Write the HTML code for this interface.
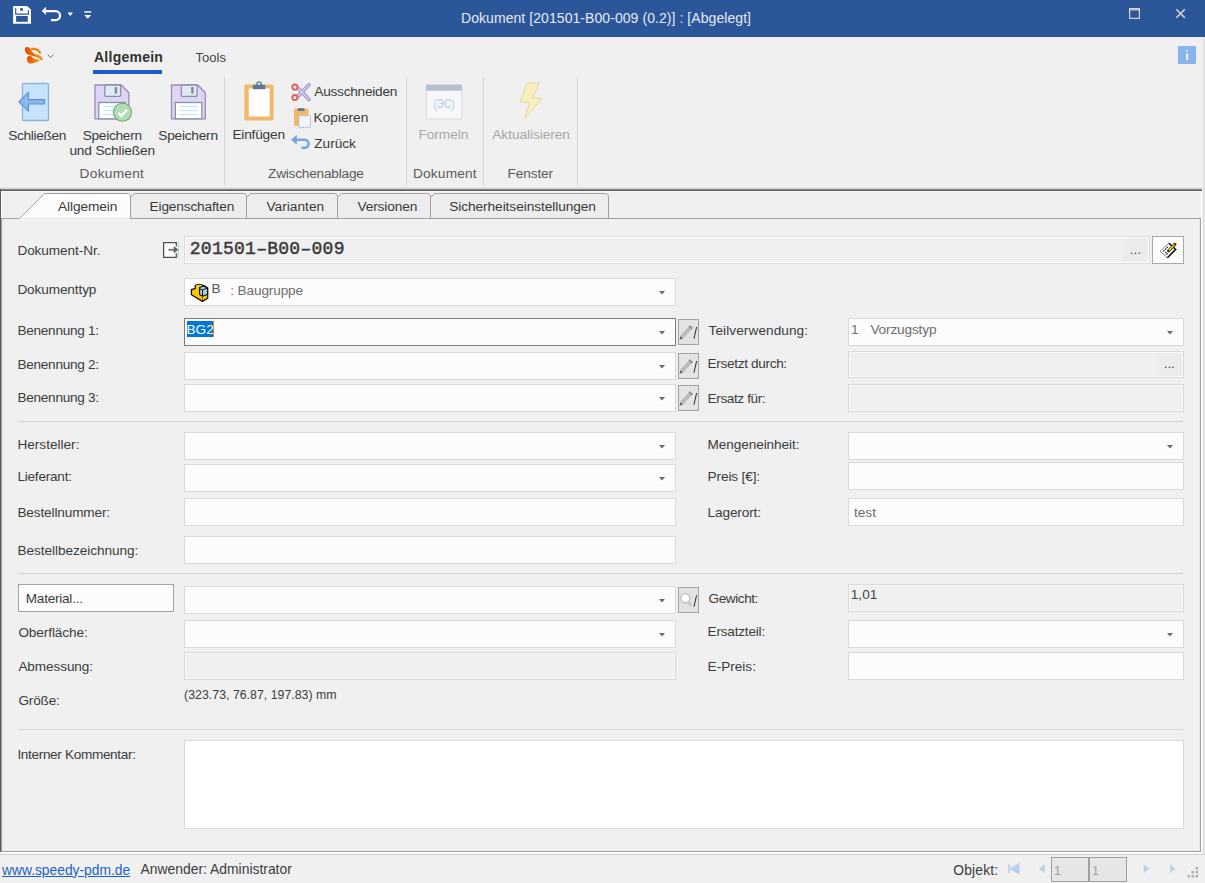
<!DOCTYPE html>
<html><head><meta charset="utf-8"><title>Dokument</title>
<style>
html,body{margin:0;padding:0;}
body{width:1205px;height:883px;position:relative;overflow:hidden;background:#f0f0f0;font-family:"Liberation Sans",sans-serif;}
.t{position:absolute;white-space:nowrap;line-height:1;}
.r{position:absolute;box-sizing:border-box;}
.ov{position:absolute;left:0;top:0;}
</style></head><body>
<div class="r" style="left:0px;top:0px;width:1205px;height:37px;background:#2b579a;"></div>
<div class="t" style="left:461.00px;top:10.70px;font-size:14px;color:#e6e9ef;font-weight:normal;font-family:'Liberation Sans', sans-serif;letter-spacing:0.065px;">Dokument [201501-B00-009 (0.2)] : [Abgelegt]</div>
<div class="r" style="left:0px;top:37px;width:1205px;height:152px;background:#f0f0f0;"></div>
<div class="t" style="left:94.00px;top:50.00px;font-size:14px;color:#303030;font-weight:bold;font-family:'Liberation Sans', sans-serif;letter-spacing:0.250px;">Allgemein</div>
<div class="t" style="left:195.50px;top:51.00px;font-size:13px;color:#444;font-weight:normal;font-family:'Liberation Sans', sans-serif;letter-spacing:0.050px;">Tools</div>
<div class="r" style="left:93px;top:70px;width:69px;height:4px;background:#1b5cc8;"></div>
<div class="r" style="left:224px;top:77px;width:1px;height:108px;background:#d4d4d4;"></div>
<div class="r" style="left:406px;top:77px;width:1px;height:108px;background:#d4d4d4;"></div>
<div class="r" style="left:483px;top:77px;width:1px;height:108px;background:#d4d4d4;"></div>
<div class="r" style="left:577px;top:77px;width:1px;height:108px;background:#d4d4d4;"></div>
<div class="t" style="left:8.30px;top:128.65px;font-size:13.7px;color:#3a3a3a;font-weight:normal;font-family:'Liberation Sans', sans-serif;letter-spacing:-0.350px;">Schließen</div>
<div class="t" style="left:82.70px;top:128.65px;font-size:13.7px;color:#3a3a3a;font-weight:normal;font-family:'Liberation Sans', sans-serif;letter-spacing:-0.287px;">Speichern</div>
<div class="t" style="left:69.40px;top:143.65px;font-size:13.7px;color:#3a3a3a;font-weight:normal;font-family:'Liberation Sans', sans-serif;letter-spacing:-0.158px;">und Schließen</div>
<div class="t" style="left:158.30px;top:128.65px;font-size:13.7px;color:#3a3a3a;font-weight:normal;font-family:'Liberation Sans', sans-serif;letter-spacing:-0.238px;">Speichern</div>
<div class="t" style="left:232.40px;top:128.35px;font-size:13.7px;color:#3a3a3a;font-weight:normal;font-family:'Liberation Sans', sans-serif;letter-spacing:-0.200px;">Einfügen</div>
<div class="t" style="left:314.30px;top:84.95px;font-size:13.7px;color:#3a3a3a;font-weight:normal;font-family:'Liberation Sans', sans-serif;letter-spacing:-0.264px;">Ausschneiden</div>
<div class="t" style="left:313.60px;top:110.95px;font-size:13.7px;color:#3a3a3a;font-weight:normal;font-family:'Liberation Sans', sans-serif;letter-spacing:-0.014px;">Kopieren</div>
<div class="t" style="left:314.30px;top:136.95px;font-size:13.7px;color:#3a3a3a;font-weight:normal;font-family:'Liberation Sans', sans-serif;letter-spacing:-0.060px;">Zurück</div>
<div class="t" style="left:418.40px;top:128.05px;font-size:13.7px;color:#a8a8a8;font-weight:normal;font-family:'Liberation Sans', sans-serif;letter-spacing:-0.017px;">Formeln</div>
<div class="t" style="left:492.30px;top:128.05px;font-size:13.7px;color:#a8a8a8;font-weight:normal;font-family:'Liberation Sans', sans-serif;letter-spacing:-0.058px;">Aktualisieren</div>
<div class="t" style="left:79.60px;top:167.25px;font-size:13.7px;color:#5a5a5a;font-weight:normal;font-family:'Liberation Sans', sans-serif;letter-spacing:0.271px;">Dokument</div>
<div class="t" style="left:268.00px;top:166.95px;font-size:13.7px;color:#5a5a5a;font-weight:normal;font-family:'Liberation Sans', sans-serif;letter-spacing:-0.231px;">Zwischenablage</div>
<div class="t" style="left:412.90px;top:167.45px;font-size:13.7px;color:#5a5a5a;font-weight:normal;font-family:'Liberation Sans', sans-serif;letter-spacing:0.200px;">Dokument</div>
<div class="t" style="left:507.50px;top:167.45px;font-size:13.7px;color:#5a5a5a;font-weight:normal;font-family:'Liberation Sans', sans-serif;letter-spacing:-0.133px;">Fenster</div>
<div class="r" style="left:0px;top:189px;width:1205px;height:666px;background:#f0f0f0;"></div>
<div class="r" style="left:0px;top:187px;width:1202px;height:1px;background:#e6e6e6;"></div>
<div class="r" style="left:0px;top:188px;width:1202px;height:1px;background:#cfcfcf;"></div>
<div class="r" style="left:0px;top:189px;width:1202px;height:1px;background:#8a8a8a;"></div>
<div class="r" style="left:0px;top:190px;width:1202px;height:1px;background:#5e5e5e;"></div>
<div class="r" style="left:0px;top:189px;width:1px;height:663px;background:#5c5c5c;"></div>
<div class="r" style="left:1px;top:191px;width:1px;height:28px;background:#ffffff;"></div>
<div class="r" style="left:2px;top:191px;width:1200px;height:1px;background:#fafafa;"></div>
<div class="r" style="left:1203px;top:37px;width:2px;height:818px;background:#e2e2e2;"></div>
<div class="r" style="left:1201px;top:191px;width:1px;height:662px;background:#ffffff;"></div>
<div class="r" style="left:1px;top:218px;width:1200px;height:634px;background:#f0f0f0;"></div>
<div class="r" style="left:1200px;top:218px;width:1px;height:634px;background:#a0a0a0;"></div>
<div class="r" style="left:1px;top:851px;width:1200px;height:1px;background:#a6a6a6;"></div>
<div class="r" style="left:1px;top:219px;width:1px;height:633px;background:#a0a0a0;"></div>
<div class="r" style="left:2px;top:219px;width:1px;height:632px;background:#e2e2e2;"></div>
<div class="r" style="left:3px;top:850px;width:1197px;height:1px;background:#e6e6e6;"></div>
<div class="r" style="left:1199px;top:219px;width:1px;height:632px;background:#e6e6e6;"></div>
<div class="r" style="left:0px;top:852px;width:1202px;height:2px;background:#fcfcfc;"></div>
<div class="r" style="left:0px;top:854px;width:1205px;height:1px;background:#d0d0d0;"></div>
<svg class="ov" width="1205" height="883" viewBox="0 0 1205 883">
<path d="M1 218.5 H1200.5" stroke="#a0a0a0" stroke-width="1" fill="none"/>
<path d="M19.5 218.5 L44.5 193.5 H128.5 L130.5 195.5 V218.5" fill="#fcfcfc" stroke="#a0a0a0" stroke-width="1"/>
<path d="M19 219 H130" stroke="#fcfcfc" stroke-width="1.2"/>
<path d="M130.5 218 V197.5 L134.5 193.5 H243.5 Q246.5 193.5 246.5 196.5 V218" fill="#ededed" stroke="#a0a0a0" stroke-width="1"/>
<path d="M246.5 218 V197.5 L250.5 193.5 H334.5 Q337.5 193.5 337.5 196.5 V218" fill="#ededed" stroke="#a0a0a0" stroke-width="1"/>
<path d="M337.5 218 V197.5 L341.5 193.5 H427.5 Q430.5 193.5 430.5 196.5 V218" fill="#ededed" stroke="#a0a0a0" stroke-width="1"/>
<path d="M430.5 218 V197.5 L434.5 193.5 H605.5 Q608.5 193.5 608.5 196.5 V218" fill="#ededed" stroke="#a0a0a0" stroke-width="1"/>
</svg>
<div class="t" style="left:58.00px;top:199.95px;font-size:13.7px;color:#3a3a3a;font-weight:normal;font-family:'Liberation Sans', sans-serif;letter-spacing:-0.088px;">Allgemein</div>
<div class="t" style="left:149.60px;top:199.95px;font-size:13.7px;color:#3a3a3a;font-weight:normal;font-family:'Liberation Sans', sans-serif;letter-spacing:-0.175px;">Eigenschaften</div>
<div class="t" style="left:266.40px;top:199.95px;font-size:13.7px;color:#3a3a3a;font-weight:normal;font-family:'Liberation Sans', sans-serif;letter-spacing:0.025px;">Varianten</div>
<div class="t" style="left:357.40px;top:199.95px;font-size:13.7px;color:#3a3a3a;font-weight:normal;font-family:'Liberation Sans', sans-serif;letter-spacing:-0.125px;">Versionen</div>
<div class="t" style="left:449.20px;top:199.95px;font-size:13.7px;color:#3a3a3a;font-weight:normal;font-family:'Liberation Sans', sans-serif;letter-spacing:-0.070px;">Sicherheitseinstellungen</div>
<div class="r" style="left:184px;top:236px;width:966px;height:28px;background:#f0f0f0;box-shadow: inset 0 0 0 1px #dadada, inset 0 0 0 2px #ffffff;"></div>
<div class="r" style="left:1123px;top:238px;width:25px;height:24px;background:#ececec;"></div>
<div class="t" style="left:1130.00px;top:244.30px;font-size:12px;color:#303060;font-weight:normal;font-family:'Liberation Sans', sans-serif;letter-spacing:0.400px;">...</div>
<div class="r" style="left:1152px;top:236px;width:32px;height:28px;background:#fdfdfd;box-shadow: inset 0 0 0 1px #a8a8a8;"></div>
<div class="r" style="left:184px;top:278px;width:492px;height:28px;background:#fcfcfc;box-shadow: inset 0 0 0 1px #d9d9d9;"></div>
<svg class="r" style="left:657.5px;top:289.5px" width="8" height="6"><path d="M1 1 H7 L4 4.5 Z" fill="#6a6a6a"/></svg>
<div class="r" style="left:184px;top:318px;width:492px;height:28px;background:#fcfcfc;box-shadow: inset 0 0 0 1px #7a7a7a;"></div>
<svg class="r" style="left:657.5px;top:329.5px" width="8" height="6"><path d="M1 1 H7 L4 4.5 Z" fill="#6a6a6a"/></svg>
<div class="r" style="left:184px;top:352px;width:492px;height:28px;background:#fcfcfc;box-shadow: inset 0 0 0 1px #d9d9d9;"></div>
<svg class="r" style="left:657.5px;top:363.5px" width="8" height="6"><path d="M1 1 H7 L4 4.5 Z" fill="#6a6a6a"/></svg>
<div class="r" style="left:184px;top:384px;width:492px;height:28px;background:#fcfcfc;box-shadow: inset 0 0 0 1px #d9d9d9;"></div>
<svg class="r" style="left:657.5px;top:395.5px" width="8" height="6"><path d="M1 1 H7 L4 4.5 Z" fill="#6a6a6a"/></svg>
<div class="r" style="left:18px;top:421px;width:1165px;height:1px;background:#d4d4d4;"></div>
<div class="r" style="left:184px;top:432px;width:492px;height:28px;background:#fcfcfc;box-shadow: inset 0 0 0 1px #d9d9d9;"></div>
<svg class="r" style="left:657.5px;top:443.5px" width="8" height="6"><path d="M1 1 H7 L4 4.5 Z" fill="#6a6a6a"/></svg>
<div class="r" style="left:184px;top:464px;width:492px;height:28px;background:#fcfcfc;box-shadow: inset 0 0 0 1px #d9d9d9;"></div>
<svg class="r" style="left:657.5px;top:475.5px" width="8" height="6"><path d="M1 1 H7 L4 4.5 Z" fill="#6a6a6a"/></svg>
<div class="r" style="left:184px;top:498px;width:492px;height:28px;background:#fcfcfc;box-shadow: inset 0 0 0 1px #d9d9d9;"></div>
<div class="r" style="left:184px;top:536px;width:492px;height:28px;background:#fcfcfc;box-shadow: inset 0 0 0 1px #d9d9d9;"></div>
<div class="r" style="left:18px;top:573px;width:1165px;height:1px;background:#d4d4d4;"></div>
<div class="r" style="left:18px;top:584px;width:156px;height:28px;background:#fcfcfc;box-shadow: inset 0 0 0 1px #a2a2a2;"></div>
<div class="r" style="left:184px;top:586px;width:492px;height:28px;background:#fcfcfc;box-shadow: inset 0 0 0 1px #d9d9d9;"></div>
<svg class="r" style="left:657.5px;top:597.5px" width="8" height="6"><path d="M1 1 H7 L4 4.5 Z" fill="#6a6a6a"/></svg>
<div class="r" style="left:184px;top:620px;width:492px;height:28px;background:#fcfcfc;box-shadow: inset 0 0 0 1px #d9d9d9;"></div>
<svg class="r" style="left:657.5px;top:631.5px" width="8" height="6"><path d="M1 1 H7 L4 4.5 Z" fill="#6a6a6a"/></svg>
<div class="r" style="left:184px;top:652px;width:492px;height:28px;background:#f0f0f0;box-shadow: inset 0 0 0 1px #dadada, inset 0 0 0 2px #f8f8f8;"></div>
<div class="r" style="left:18px;top:729px;width:1165px;height:1px;background:#d4d4d4;"></div>
<div class="r" style="left:184px;top:740px;width:1000px;height:89px;background:#ffffff;box-shadow: inset 0 0 0 1px #d9d9d9;"></div>
<div class="r" style="left:848px;top:318px;width:336px;height:28px;background:#fcfcfc;box-shadow: inset 0 0 0 1px #d9d9d9;"></div>
<svg class="r" style="left:1165.5px;top:329.5px" width="8" height="6"><path d="M1 1 H7 L4 4.5 Z" fill="#6a6a6a"/></svg>
<div class="r" style="left:848px;top:351px;width:336px;height:27px;background:#f0f0f0;box-shadow: inset 0 0 0 1px #dadada, inset 0 0 0 2px #f8f8f8;"></div>
<div class="r" style="left:1157px;top:353px;width:25px;height:23px;background:#ececec;"></div>
<div class="r" style="left:848px;top:384px;width:336px;height:28px;background:#f0f0f0;box-shadow: inset 0 0 0 1px #dadada, inset 0 0 0 2px #f8f8f8;"></div>
<div class="r" style="left:848px;top:432px;width:336px;height:28px;background:#fcfcfc;box-shadow: inset 0 0 0 1px #d9d9d9;"></div>
<svg class="r" style="left:1165.5px;top:443.5px" width="8" height="6"><path d="M1 1 H7 L4 4.5 Z" fill="#6a6a6a"/></svg>
<div class="r" style="left:848px;top:462px;width:336px;height:28px;background:#fcfcfc;box-shadow: inset 0 0 0 1px #d9d9d9;"></div>
<div class="r" style="left:848px;top:498px;width:336px;height:28px;background:#fcfcfc;box-shadow: inset 0 0 0 1px #d9d9d9;"></div>
<div class="r" style="left:848px;top:584px;width:336px;height:28px;background:#f0f0f0;box-shadow: inset 0 0 0 1px #dadada, inset 0 0 0 2px #f8f8f8;"></div>
<div class="r" style="left:848px;top:620px;width:336px;height:28px;background:#fcfcfc;box-shadow: inset 0 0 0 1px #d9d9d9;"></div>
<svg class="r" style="left:1165.5px;top:631.5px" width="8" height="6"><path d="M1 1 H7 L4 4.5 Z" fill="#6a6a6a"/></svg>
<div class="r" style="left:848px;top:652px;width:336px;height:28px;background:#fcfcfc;box-shadow: inset 0 0 0 1px #d9d9d9;"></div>
<div class="t" style="left:1164.00px;top:358.00px;font-size:12px;color:#303060;font-weight:normal;font-family:'Liberation Sans', sans-serif;letter-spacing:0.300px;">...</div>
<div class="r" style="left:678px;top:319px;width:21px;height:26px;background:#e3e3e3;box-shadow: inset 0 0 0 1px #a3a3a3;"></div>
<div class="r" style="left:678px;top:353px;width:21px;height:26px;background:#e3e3e3;box-shadow: inset 0 0 0 1px #a3a3a3;"></div>
<div class="r" style="left:678px;top:385px;width:21px;height:26px;background:#e3e3e3;box-shadow: inset 0 0 0 1px #a3a3a3;"></div>
<div class="r" style="left:678px;top:587px;width:21px;height:26px;background:#e3e3e3;box-shadow: inset 0 0 0 1px #a3a3a3;"></div>
<div class="t" style="left:17.40px;top:244.10px;font-size:13.6px;color:#3c3c3c;font-weight:normal;font-family:'Liberation Sans', sans-serif;letter-spacing:-0.073px;">Dokument-Nr.</div>
<div class="t" style="left:17.40px;top:283.40px;font-size:13.6px;color:#3c3c3c;font-weight:normal;font-family:'Liberation Sans', sans-serif;letter-spacing:-0.110px;">Dokumenttyp</div>
<div class="t" style="left:17.40px;top:323.60px;font-size:13.6px;color:#3c3c3c;font-weight:normal;font-family:'Liberation Sans', sans-serif;letter-spacing:-0.264px;">Benennung 1:</div>
<div class="t" style="left:17.40px;top:357.50px;font-size:13.6px;color:#3c3c3c;font-weight:normal;font-family:'Liberation Sans', sans-serif;letter-spacing:-0.264px;">Benennung 2:</div>
<div class="t" style="left:17.40px;top:391.40px;font-size:13.6px;color:#3c3c3c;font-weight:normal;font-family:'Liberation Sans', sans-serif;letter-spacing:-0.264px;">Benennung 3:</div>
<div class="t" style="left:17.40px;top:437.50px;font-size:13.6px;color:#3c3c3c;font-weight:normal;font-family:'Liberation Sans', sans-serif;letter-spacing:0.010px;">Hersteller:</div>
<div class="t" style="left:17.40px;top:469.60px;font-size:13.6px;color:#3c3c3c;font-weight:normal;font-family:'Liberation Sans', sans-serif;letter-spacing:-0.233px;">Lieferant:</div>
<div class="t" style="left:17.40px;top:505.60px;font-size:13.6px;color:#3c3c3c;font-weight:normal;font-family:'Liberation Sans', sans-serif;letter-spacing:-0.131px;">Bestellnummer:</div>
<div class="t" style="left:17.40px;top:543.60px;font-size:13.6px;color:#3c3c3c;font-weight:normal;font-family:'Liberation Sans', sans-serif;letter-spacing:-0.039px;">Bestellbezeichnung:</div>
<div class="t" style="left:18.40px;top:625.60px;font-size:13.6px;color:#3c3c3c;font-weight:normal;font-family:'Liberation Sans', sans-serif;letter-spacing:-0.100px;">Oberfläche:</div>
<div class="t" style="left:18.40px;top:659.60px;font-size:13.6px;color:#3c3c3c;font-weight:normal;font-family:'Liberation Sans', sans-serif;letter-spacing:-0.100px;">Abmessung:</div>
<div class="t" style="left:18.40px;top:693.80px;font-size:13.6px;color:#3c3c3c;font-weight:normal;font-family:'Liberation Sans', sans-serif;letter-spacing:-0.180px;">Größe:</div>
<div class="t" style="left:17.40px;top:747.80px;font-size:13.6px;color:#3c3c3c;font-weight:normal;font-family:'Liberation Sans', sans-serif;letter-spacing:-0.339px;">Interner Kommentar:</div>
<div class="t" style="left:25.80px;top:591.70px;font-size:13.6px;color:#3c3c3c;font-weight:normal;font-family:'Liberation Sans', sans-serif;letter-spacing:-0.250px;">Material...</div>
<div class="t" style="left:708.60px;top:324.20px;font-size:13.6px;color:#3c3c3c;font-weight:normal;font-family:'Liberation Sans', sans-serif;letter-spacing:0.086px;">Teilverwendung:</div>
<div class="t" style="left:707.60px;top:357.40px;font-size:13.6px;color:#3c3c3c;font-weight:normal;font-family:'Liberation Sans', sans-serif;letter-spacing:-0.331px;">Ersetzt durch:</div>
<div class="t" style="left:707.60px;top:391.50px;font-size:13.6px;color:#3c3c3c;font-weight:normal;font-family:'Liberation Sans', sans-serif;letter-spacing:-0.390px;">Ersatz für:</div>
<div class="t" style="left:707.60px;top:437.50px;font-size:13.6px;color:#3c3c3c;font-weight:normal;font-family:'Liberation Sans', sans-serif;letter-spacing:-0.085px;">Mengeneinheit:</div>
<div class="t" style="left:707.60px;top:469.60px;font-size:13.6px;color:#3c3c3c;font-weight:normal;font-family:'Liberation Sans', sans-serif;letter-spacing:-0.122px;">Preis [€]:</div>
<div class="t" style="left:707.60px;top:505.60px;font-size:13.6px;color:#3c3c3c;font-weight:normal;font-family:'Liberation Sans', sans-serif;letter-spacing:-0.125px;">Lagerort:</div>
<div class="t" style="left:708.60px;top:591.70px;font-size:13.6px;color:#3c3c3c;font-weight:normal;font-family:'Liberation Sans', sans-serif;letter-spacing:-0.443px;">Gewicht:</div>
<div class="t" style="left:707.60px;top:625.40px;font-size:13.6px;color:#3c3c3c;font-weight:normal;font-family:'Liberation Sans', sans-serif;letter-spacing:-0.210px;">Ersatzteil:</div>
<div class="t" style="left:707.60px;top:659.70px;font-size:13.6px;color:#3c3c3c;font-weight:normal;font-family:'Liberation Sans', sans-serif;letter-spacing:0.000px;">E-Preis:</div>
<div class="t" style="left:189.80px;top:240.40px;font-size:18px;color:#3a3a3a;font-weight:normal;font-family:'Liberation Mono', monospace;letter-spacing:0.262px;-webkit-text-stroke:0.45px #3a3a3a;">201501–B00–009</div>
<div class="t" style="left:211.50px;top:282.10px;font-size:13.6px;color:#555;font-weight:normal;font-family:'Liberation Sans', sans-serif;">B</div>
<div class="t" style="left:230.30px;top:283.90px;font-size:13.6px;color:#6d6d6d;font-weight:normal;font-family:'Liberation Sans', sans-serif;letter-spacing:-0.130px;">: Baugruppe</div>
<div class="r" style="left:187px;top:321px;width:26px;height:16px;background:#0078d7;"></div>
<div class="r" style="left:213px;top:321px;width:1px;height:16px;background:#f07a10;"></div>
<div class="t" style="left:186.50px;top:323.20px;font-size:13.6px;color:#ffffff;font-weight:normal;font-family:'Liberation Sans', sans-serif;">BG2</div>
<div class="t" style="left:851.00px;top:322.80px;font-size:13.6px;color:#6d6d6d;font-weight:normal;font-family:'Liberation Sans', sans-serif;">1</div>
<div class="t" style="left:870.40px;top:322.80px;font-size:13.6px;color:#6d6d6d;font-weight:normal;font-family:'Liberation Sans', sans-serif;letter-spacing:-0.133px;">Vorzugstyp</div>
<div class="t" style="left:854.00px;top:505.70px;font-size:13.6px;color:#6d6d6d;font-weight:normal;font-family:'Liberation Sans', sans-serif;">test</div>
<div class="t" style="left:850.80px;top:588.10px;font-size:13.6px;color:#444;font-weight:normal;font-family:'Liberation Sans', sans-serif;">1,01</div>
<div class="t" style="left:184.10px;top:688.55px;font-size:12.3px;color:#3c3c3c;font-weight:normal;font-family:'Liberation Sans', sans-serif;letter-spacing:0.028px;">(323.73, 76.87, 197.83) mm</div>
<svg class="ov" width="1205" height="883"><path d="M694 338.7 L696.6 327" stroke="#2a2a2a" stroke-width="1"/></svg>
<svg class="ov" width="1205" height="883"><path d="M694 372.7 L696.6 361" stroke="#2a2a2a" stroke-width="1"/></svg>
<svg class="ov" width="1205" height="883"><path d="M694 404.7 L696.6 393" stroke="#2a2a2a" stroke-width="1"/></svg>
<svg class="ov" width="1205" height="883"><path d="M694 606.6 L696.6 595.3" stroke="#2a2a2a" stroke-width="1"/></svg>
<div class="r" style="left:0px;top:855px;width:1205px;height:28px;background:#f0f0f0;"></div>
<div class="t" style="left:2.00px;top:863.60px;font-size:13.8px;color:#1a62c8;font-weight:normal;font-family:'Liberation Sans', sans-serif;letter-spacing:0.000px;text-decoration:underline;">www.speedy-pdm.de</div>
<div class="t" style="left:140.60px;top:863.35px;font-size:13.9px;color:#3c3c3c;font-weight:normal;font-family:'Liberation Sans', sans-serif;letter-spacing:-0.005px;">Anwender: Administrator</div>
<div class="t" style="left:953.20px;top:863.55px;font-size:13.9px;color:#3c3c3c;font-weight:normal;font-family:'Liberation Sans', sans-serif;letter-spacing:0.167px;">Objekt:</div>
<div class="r" style="left:1051px;top:857px;width:76px;height:25px;background:#e6e6e6;box-shadow: inset 0 0 0 1px #a0a0a0;"></div>
<div class="r" style="left:1088px;top:857px;width:2px;height:25px;background:#a0a0a0;"></div>
<div class="t" style="left:1054.00px;top:865.15px;font-size:12.5px;color:#a0a0a0;font-weight:normal;font-family:'Liberation Sans', sans-serif;">1</div>
<div class="t" style="left:1092.00px;top:865.15px;font-size:12.5px;color:#a0a0a0;font-weight:normal;font-family:'Liberation Sans', sans-serif;">1</div>
<svg class="ov" width="1205" height="883" viewBox="0 0 1205 883">
<!-- title save -->
<path d="M13.1 6.1 H27 L31 9.6 V23.8 H13.1 Z" fill="#ffffff"/>
<path d="M15.7 8 V14.1 H28.4 V10" fill="none" stroke="#2b579a" stroke-width="1.1"/>
<rect x="20.2" y="8.1" width="2.7" height="2.7" fill="#2b579a"/>
<rect x="16.1" y="16" width="11.7" height="5.8" fill="#2b579a"/>
<!-- undo -->
<path d="M45.5 11.2 H55.6 A4.45 4.45 0 0 1 55.6 20.1 H51" fill="none" stroke="#fff" stroke-width="2.3"/>
<path d="M41.7 10.9 L45.9 6.7 V15 Z" fill="#fff"/>
<path d="M67.5 12.5 H73 L70.25 16 Z" fill="#fff"/>
<path d="M84.3 11.9 H91.2" stroke="#d8dde8" stroke-width="1.8"/>
<path d="M84.3 15 H91.2 L87.75 18.8 Z" fill="#fff"/>
<!-- maximize & close -->
<rect x="1129.6" y="8.6" width="9.8" height="9.8" fill="none" stroke="#d9d5ce" stroke-width="1.2"/>
<path d="M1129 9.8 H1140" stroke="#d9d5ce" stroke-width="1.2"/>
<path d="M1176.3 9.3 L1184.8 17.8 M1184.8 9.3 L1176.3 17.8" stroke="#d9d5ce" stroke-width="1.6"/>
<!-- info button -->
<rect x="1178" y="46" width="18" height="18" rx="1" fill="#8ab4ee"/>
<rect x="1186" y="53.6" width="2.2" height="6.2" fill="#eef3fc"/>
<rect x="1186" y="49.9" width="2.2" height="1.5" fill="#d4e3f9"/>
<!-- logo -->
<defs><linearGradient id="lg" x1="0" y1="0" x2="1" y2="0.3"><stop offset="0" stop-color="#e84400"/><stop offset="1" stop-color="#f68c12"/></linearGradient></defs>
<g fill="url(#lg)">
<path d="M25 48.5 C25.5 46.5 28.5 46.5 30 48.5 C31.5 50.5 32.5 53 35 54 C38 55 40.5 55.5 41.5 57 C42.5 58.5 43 60 42 60.5 C41 61 40 59 38.5 58 C36 56.5 32 56 29 55 C26 54 24.5 51 25 48.5 Z"/>
<path d="M27 58.5 C27 55.5 31 55.5 32.5 57.5 C33.5 59 35.5 59.5 38.5 59.5 C39.5 59.6 39.5 61.3 38.5 61.5 C35 62.5 32 64 29.5 63.5 C27.5 63 27 60.5 27 58.5 Z"/>
</g>
<path d="M32 48.9 C35 48.6 38 49.2 40 52.6" fill="none" stroke="#f47c12" stroke-width="2.2" stroke-linecap="round"/>
<path d="M47.7 54.7 L50.5 57.5 L53.3 54.7" fill="none" stroke="#707070" stroke-width="1"/>
<!-- Schliessen -->
<rect x="22.5" y="83.5" width="26" height="37" rx="1" fill="#c5e4fb" stroke="#8db3df" stroke-width="1.3"/>
<path d="M18.8 101.8 L28.5 92.3 V99.6 H44.6 V104 H28.5 V111.2 Z" fill="#8ab8ef" stroke="#5d8fd2" stroke-width="1.1" stroke-linejoin="round"/>
<!-- Speichern und Schliessen -->
<g stroke-width="1.3">
<path d="M95 85 H121.2 L128.8 92.8 V118.8 H95 Z" fill="#ddd5f3" stroke="#9d88c2"/>
<rect x="104.8" y="85" width="15.8" height="11.4" rx="1" fill="#e0e9f3" stroke="#8793a6"/>
<rect x="114.7" y="87" width="2.4" height="6.5" fill="#7d8aa0"/>
<rect x="98.8" y="102.5" width="26.5" height="16.3" fill="#fff" stroke="#8793a6"/>
<path d="M102.8 106.6 H122 M102.8 110.5 H122 M102.8 114.4 H122" stroke="#cfe6f8" stroke-width="1.5"/>
<circle cx="122.5" cy="112.3" r="9" fill="#b6dcb6" stroke="#70ac70" stroke-width="1.1"/>
<path d="M118.3 113 L121.2 116 L127 109.8" fill="none" stroke="#ffffff" stroke-width="2.2"/>
</g>
<!-- Speichern -->
<g stroke-width="1.3">
<path d="M171.5 85 H197.7 L205.3 92.8 V118.8 H171.5 Z" fill="#ddd5f3" stroke="#9d88c2"/>
<rect x="181.3" y="85" width="15.8" height="11.4" rx="1" fill="#e0e9f3" stroke="#8793a6"/>
<rect x="191.2" y="87" width="2.4" height="6.5" fill="#7d8aa0"/>
<rect x="175.3" y="102.5" width="26.5" height="16.3" fill="#fff" stroke="#8793a6"/>
<path d="M179.3 106.6 H198 M179.3 110.5 H198 M179.3 114.4 H198" stroke="#cfe6f8" stroke-width="1.5"/>
</g>
<!-- Einfuegen clipboard -->
<rect x="244.3" y="84.4" width="29.3" height="36.2" rx="1.8" fill="#f0b868"/>
<rect x="248.7" y="88.4" width="21" height="28.1" fill="#ffffff"/>
<rect x="252.8" y="84.8" width="12.6" height="4.5" rx="0.8" fill="#5e7896"/>
<circle cx="259.1" cy="84" r="2.2" fill="none" stroke="#5e7896" stroke-width="1.3"/>
<!-- scissors -->
<path d="M298 88.3 L309 99.5 M298 96.2 L309 84.8" stroke="#9a88c8" stroke-width="3.4" stroke-linecap="round"/>
<path d="M298 88.3 L309 99.5 M298 96.2 L309 84.8" stroke="#dcd2f2" stroke-width="1.6" stroke-linecap="round"/>
<circle cx="294.9" cy="87.1" r="2.6" fill="#f0f0f0" stroke="#e06468" stroke-width="2"/>
<circle cx="294.9" cy="97.5" r="2.6" fill="#f0f0f0" stroke="#e06468" stroke-width="2"/>
<!-- kopieren -->
<rect x="294" y="108.8" width="14.5" height="17.2" rx="1" fill="#f0b868"/>
<rect x="297.6" y="108.2" width="6.8" height="2.8" fill="#5e7896"/>
<rect x="298.8" y="115.8" width="11.7" height="11.6" fill="#eef5fc" stroke="#b0bccb" stroke-width="1" stroke-dasharray="2 0.7"/>
<!-- zurueck -->
<path d="M295 139.8 H304.6 A4 4 0 0 1 304.6 147.8 H301.4" fill="none" stroke="#74a4e2" stroke-width="2.5"/>
<path d="M291.6 139.8 L296.4 135.6 V144 Z" fill="#74a4e2" stroke="#74a4e2" stroke-width="0.8" stroke-linejoin="round"/>
<!-- formeln -->
<rect x="426.3" y="85" width="35.5" height="34" rx="1.2" fill="#f7f7f7" stroke="#d4dbe3" stroke-width="1"/>
<rect x="426" y="84.7" width="36" height="6" fill="#b4c0cc"/>
<text x="433.5" y="107.8" font-family="Liberation Sans" font-size="12" fill="#b0cdf0" textLength="21" lengthAdjust="spacingAndGlyphs">(ЭС)</text>
<!-- lightning -->
<path d="M526.8 83 H539.5 L532.2 98 H541.9 L524.1 119.5 L530 102.3 H520.3 Z" fill="#f8eec0" stroke="#e6d49a" stroke-width="0.9" stroke-linejoin="round"/>
<!-- import icon -->
<rect x="163.6" y="242.6" width="12.7" height="14.8" fill="#fff"/>
<path d="M176.3 246.3 V242.6 H163.6 V257.4 H176.3 V253.3" fill="none" stroke="#505050" stroke-width="1.3"/>
<path d="M168.4 249.8 H175" stroke="#787878" stroke-width="1.9"/>
<path d="M174 246.6 L178 249.8 L174 253 Z" fill="#666" stroke="#666" stroke-width="0.6" stroke-linejoin="round"/>
<path d="M178.5 242 V258" stroke="#c8c8c8" stroke-width="1"/>
<!-- assembly icon -->
<path d="M191.4 289.6 L195.2 288.4 V285.4 L199.5 284.3 L204.5 285.8 L207.7 288 V298.3 L202.5 301.4 L191.4 294.8 Z" fill="#f7c600" stroke="#101010" stroke-width="1.25" stroke-linejoin="round"/>
<path d="M196 286 L199.5 285.2 L202 286" fill="none" stroke="#fff080" stroke-width="0.8"/>
<path d="M199.6 287.4 L203.5 285.9 L207.5 288 V294.2 L202.5 296.2 L199.6 294.6 Z" fill="#9fd2ef" stroke="#101010" stroke-width="1.1" stroke-linejoin="round"/>
<path d="M199.6 288.7 L202.5 290 L207.5 288 M202.5 290 V296" fill="none" stroke="#101010" stroke-width="1"/>
<path d="M202.5 296.4 V301" stroke="#a03020" stroke-width="0.9"/>
<path d="M192.2 290.2 L195 289.4" stroke="#c03010" stroke-width="0.8"/>
<!-- sign icon -->
<path d="M1160 251.3 L1169 243.2 L1175.7 249.4 L1167.4 257.7 Z" fill="#fff" stroke="#333" stroke-width="0.6"/>
<path d="M1169 243.2 L1175.7 249.4 L1167.4 257.7" fill="none" stroke="#111" stroke-width="1.5"/>
<path d="M1163.3 251.3 L1168.5 246.1 M1165.3 253.2 L1167.3 251.2 M1166.5 254.6 L1168.2 252.9" stroke="#111" stroke-width="1.1" stroke-dasharray="1.6 0.8"/>
<path d="M1168.6 250.8 L1175 244.2" stroke="#111" stroke-width="2.8" stroke-linecap="round"/>
<path d="M1168.8 250.4 L1174.4 244.8" stroke="#f2e600" stroke-width="1.5"/>
<circle cx="1175" cy="244" r="1.2" fill="#d01010"/>
<polygon points="679.6,339.8 680.1,335.0 689.9,324.8 693.3,328.0 683.6,338.9" fill="#bcbcbc" stroke="#ffffff" stroke-width="0.9" stroke-dasharray="1.2 0.9"/>
<polygon points="679.6,339.8 680.3,336.2 682.9,338.6" fill="#5e5e5e"/>
<polygon points="689.9,325.2 692.9,328.0 691.6,329.4 688.6,326.6" fill="#8c8c8c"/>
<polygon points="679.6,373.8 680.1,369.0 689.9,358.8 693.3,362.0 683.6,372.9" fill="#bcbcbc" stroke="#ffffff" stroke-width="0.9" stroke-dasharray="1.2 0.9"/>
<polygon points="679.6,373.8 680.3,370.2 682.9,372.6" fill="#5e5e5e"/>
<polygon points="689.9,359.2 692.9,362.0 691.6,363.4 688.6,360.6" fill="#8c8c8c"/>
<polygon points="679.6,405.8 680.1,401.0 689.9,390.8 693.3,394.0 683.6,404.9" fill="#bcbcbc" stroke="#ffffff" stroke-width="0.9" stroke-dasharray="1.2 0.9"/>
<polygon points="679.6,405.8 680.3,402.2 682.9,404.6" fill="#5e5e5e"/>
<polygon points="689.9,391.2 692.9,394.0 691.6,395.4 688.6,392.6" fill="#8c8c8c"/>
<!-- magnifier -->
<circle cx="685.3" cy="598.3" r="4.6" fill="#fff" stroke="#c4c4c4" stroke-width="1.6"/>
<path d="M688.6 601.8 L691.2 605.8" stroke="#c4c4c4" stroke-width="2.2"/>
<!-- status icons -->
<path d="M1009 864.5 V873 M1018.5 864.5 L1011 868.75 L1018.5 873 Z" stroke="#b8d0ee" stroke-width="1.8" fill="#b8d0ee"/>
<path d="M1044.6 864.5 L1039 868.75 L1044.6 873 Z" fill="#b8d0ee"/>
<path d="M1143.8 864.5 L1149.4 868.75 L1143.8 873 Z" fill="#b8d0ee"/>
<path d="M1170 864.5 L1175.6 868.75 L1170 873 Z" fill="#b8d0ee"/>
<g fill="#b0b0b0">
<rect x="1195.5" y="867" width="2.5" height="2.5"/>
<rect x="1191.5" y="871" width="2.5" height="2.5"/><rect x="1195.5" y="871" width="2.5" height="2.5"/>
<rect x="1187.5" y="875" width="2.5" height="2.5"/><rect x="1191.5" y="875" width="2.5" height="2.5"/><rect x="1195.5" y="875" width="2.5" height="2.5"/>
</g>
</svg>
</body></html>
